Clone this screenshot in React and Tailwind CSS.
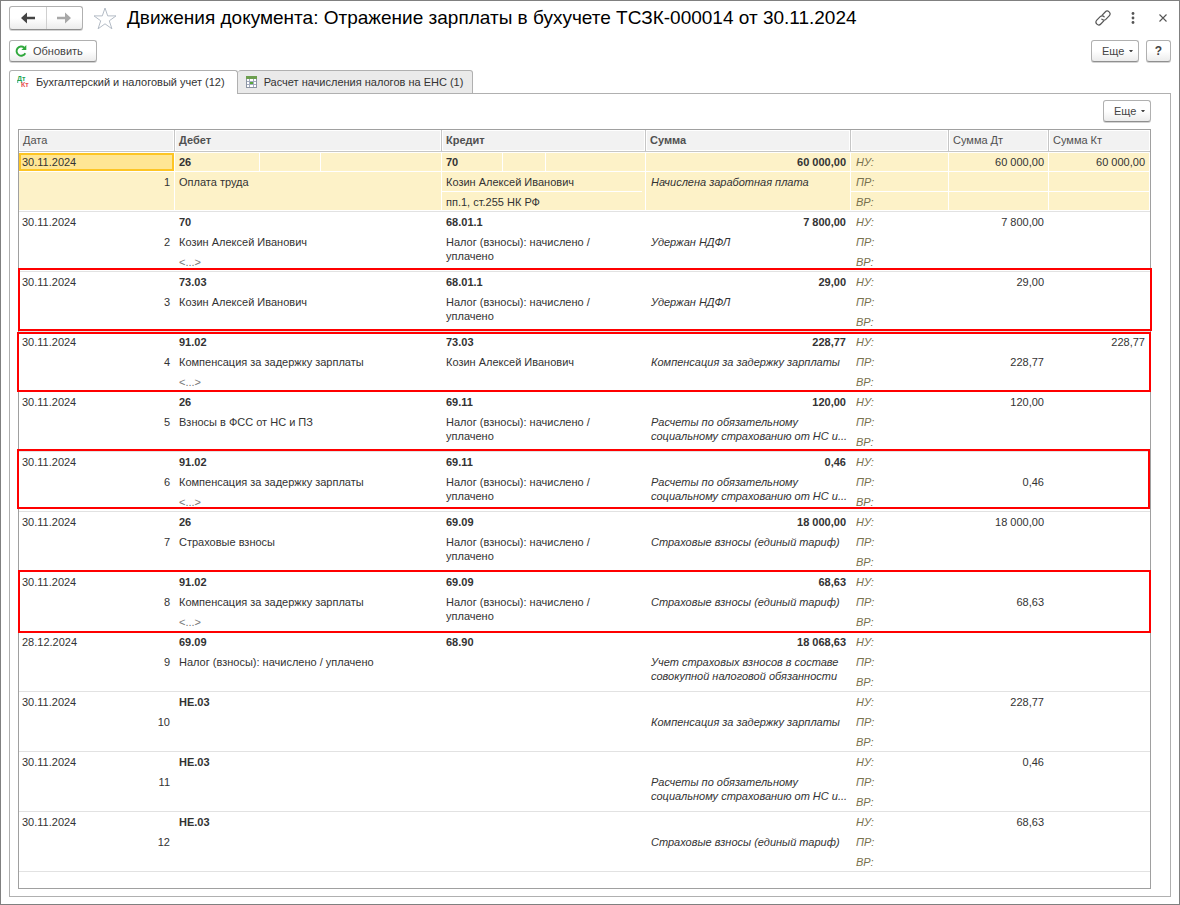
import React from 'react'
import clsx from 'clsx'

const TAX_NOTE = 'Налог (взносы): начислено /\nуплачено'
const FSS_NOTE = 'Расчеты по обязательному\nсоциальному страхованию от НС и...'
const DELAY_NOTE = 'Компенсация за задержку зарплаты'
const TARIFF_NOTE = 'Страховые взносы (единый тариф)'

// dt / kt hold three values: НУ, ПР, ВР
const entries = [
  {
    date: '30.11.2024',
    debit: ['26', 'Оплата труда'],
    credit: ['70', 'Козин Алексей Иванович', 'пп.1, ст.255 НК РФ'],
    sum: '60 000,00',
    note: 'Начислена заработная плата',
    dt: ['60 000,00'],
    kt: ['60 000,00'],
    selected: true
  },
  {
    date: '30.11.2024',
    debit: ['70', 'Козин Алексей Иванович', '<...>'],
    credit: ['68.01.1', TAX_NOTE],
    sum: '7 800,00',
    note: 'Удержан НДФЛ',
    dt: ['7 800,00'],
    kt: []
  },
  {
    date: '30.11.2024',
    debit: ['73.03', 'Козин Алексей Иванович'],
    credit: ['68.01.1', TAX_NOTE],
    sum: '29,00',
    note: 'Удержан НДФЛ',
    dt: ['29,00'],
    kt: [],
    frame: '-top-1 bottom-px -left-px -right-0.5'
  },
  {
    date: '30.11.2024',
    debit: ['91.02', DELAY_NOTE, '<...>'],
    credit: ['73.03', 'Козин Алексей Иванович'],
    sum: '228,77',
    note: DELAY_NOTE,
    dt: ['', '228,77'],
    kt: ['228,77'],
    frame: 'inset-y-0 -left-0.5 -right-px'
  },
  {
    date: '30.11.2024',
    debit: ['26', 'Взносы в ФСС от НС и ПЗ'],
    credit: ['69.11', TAX_NOTE],
    sum: '120,00',
    note: FSS_NOTE,
    dt: ['120,00'],
    kt: []
  },
  {
    date: '30.11.2024',
    debit: ['91.02', DELAY_NOTE, '<...>'],
    credit: ['69.11', TAX_NOTE],
    sum: '0,46',
    note: FSS_NOTE,
    dt: ['', '0,46'],
    kt: [],
    frame: '-top-[3px] bottom-[3px] -left-0.5 right-0'
  },
  {
    date: '30.11.2024',
    debit: ['26', 'Страховые взносы'],
    credit: ['69.09', TAX_NOTE],
    sum: '18 000,00',
    note: TARIFF_NOTE,
    dt: ['18 000,00'],
    kt: []
  },
  {
    date: '30.11.2024',
    debit: ['91.02', DELAY_NOTE, '<...>'],
    credit: ['69.09', TAX_NOTE],
    sum: '68,63',
    note: TARIFF_NOTE,
    dt: ['', '68,63'],
    kt: [],
    frame: '-top-0.5 -bottom-px -inset-x-px'
  },
  {
    date: '28.12.2024',
    debit: ['69.09', 'Налог (взносы): начислено / уплачено'],
    credit: ['68.90'],
    sum: '18 068,63',
    note: 'Учет страховых взносов в составе\nсовокупной налоговой обязанности',
    dt: [],
    kt: []
  },
  {
    date: '30.11.2024',
    debit: ['НЕ.03'],
    credit: [],
    note: DELAY_NOTE,
    dt: ['228,77'],
    kt: []
  },
  {
    date: '30.11.2024',
    debit: ['НЕ.03'],
    credit: [],
    note: FSS_NOTE,
    dt: ['0,46'],
    kt: []
  },
  {
    date: '30.11.2024',
    debit: ['НЕ.03'],
    credit: [],
    note: TARIFF_NOTE,
    dt: ['68,63'],
    kt: []
  }
]

const Button = ({ className, children, ...props }) => (
  <button
    type="button"
    className={clsx(
      'flex h-[22px] items-center rounded-[3px] border border-[#b0b0b0] border-b-[#8f8f8f] bg-gradient-to-b from-white from-50% to-[#ececec] text-[#444] shadow-[0_1px_0_#d4d4d4]',
      className
    )}
    {...props}
  >
    {children}
  </button>
)

const MoreButton = () => (
  <Button className="w-12 justify-between pr-[5px] pl-2.5">
    Еще
    <svg width="4" height="2" viewBox="0 0 4 2" fill="#444">
      <path d="M0 0h4L2.5 2h-1z" />
    </svg>
  </Button>
)

const Arrow = ({ className }) => (
  <svg width="14" height="12" viewBox="0 0 14 12" className={className}>
    <path d="M0 6L6 .5V4.8H14V7.2H6V11.5Z" fill="currentColor" />
  </svg>
)

const StarIcon = () => (
  <svg width="24" height="23" viewBox="0 0 24 23" fill="none" stroke="#b4bcc6">
    <path d="M12 1l2.7 7.9H23l-6.7 4.9 2.6 8-6.9-5-6.9 5 2.6-8L1 8.9h8.3z" />
  </svg>
)

const LinkIcon = () => (
  <svg width="16" height="16" viewBox="0 0 16 16" fill="none" stroke="#555" strokeWidth="1.2" strokeLinecap="round">
    <path d="M7.2 5.2L10.2 2a2.7 2.7 0 0 1 4 3.8l-3.4 3.6a2.7 2.7 0 0 1-4-.2" />
    <path d="M8.8 10.8L5.8 14a2.7 2.7 0 0 1-4-3.8l3.4-3.6a2.7 2.7 0 0 1 4 .2" />
  </svg>
)

const RefreshIcon = () => (
  <svg width="12" height="12" viewBox="0 0 12 12" fill="none">
    <path d="M9.2 2.6A4.6 4.6 0 1 0 10.3 8.2" stroke="#2fa83c" strokeWidth="1.9" />
    <path d="M11.3 0V5H6.4z" fill="#2fa83c" />
  </svg>
)

// Small "Дт / Кт" mark
const LedgerIcon = () => (
  <svg width="14" height="14" viewBox="0 0 14 14" fontFamily="Liberation Sans" fontWeight="bold" fontSize="7">
    <text x="0" y="6" fill="#1fa655">Дт</text>
    <text x="4" y="12" fill="#e8504f">Кт</text>
  </svg>
)

const SheetIcon = () => (
  <svg width="11" height="12" viewBox="0 0 11 12">
    <rect x=".5" y=".5" width="10" height="11" fill="#fff" stroke="#8c95a3" />
    <path d="M0 0h11v3H0z" fill="#6d9f4f" />
    <path d="M3.5 3v8M7.5 3v8M1 5.5h9M1 8.5h9" stroke="#a3abbd" />
    <path d="M4 6h3v2H4z" fill="#57a83c" />
  </svg>
)

// Three lines of a cell; in the selected entry they are divided by white rules
const Lines = ({ values, selected, className }) => (
  <div className={className}>
    {[0, 1, 2].map(i => (
      <div
        key={i}
        className={clsx('border-b leading-5', i === 2 ? 'h-[19px]' : 'h-5', selected ? 'border-white' : 'border-transparent')}
      >
        {values[i]}
      </div>
    ))}
  </div>
)

const Account = ({ values, selected, split, divided }) => {
  const rule = selected ? 'border-white' : 'border-transparent'
  return (
    <>
      <div className={clsx('flex h-5 border-b leading-5 font-bold', rule)}>
        <span className={clsx('border-r pl-1', split[0], rule)}>{values[0]}</span>
        <span className={clsx('border-r', split[1], rule)} />
      </div>
      <div className={clsx('h-[39px] border-b pr-1', rule)}>
        <div className={clsx('min-h-5 border-b pt-[3px] pl-1 leading-[14px] whitespace-pre-line', divided ? rule : 'border-transparent')}>
          {values[1]}
        </div>
        {values[2] && (
          <div className={clsx('pl-1 leading-5', values[2] === '<...>' && 'text-[#777]')}>{values[2]}</div>
        )}
      </div>
    </>
  )
}

const EntryRow = ({ entry, number }) => {
  const { selected } = entry
  const rule = selected ? 'border-white' : 'border-transparent'
  const cell = clsx(
    'border-b border-[#e2e2e2] p-0 align-top',
    selected && 'bg-[#fdf2c8] shadow-[inset_0_1px_0_white,inset_-1px_0_0_white]'
  )

  return (
    <tr className="relative">
      <td className={cell}>
        <div className={clsx('h-5 border-b', selected ? 'border-white pt-px pr-px' : 'border-transparent')}>
          <div
            className={clsx(
              'h-[18px] border-2 pl-px',
              selected ? 'border-[#fdc524] bg-[#ffe694] leading-[14px]' : 'border-transparent leading-4'
            )}
          >
            {entry.date}
          </div>
        </div>
        <div className={clsx('h-[39px] border-b pr-[5px] text-right leading-5', rule)}>{number}</div>
        {entry.frame && (
          <div className={clsx('pointer-events-none absolute z-10 border-2 border-[#ff0000]', entry.frame)} />
        )}
      </td>
      <td className={cell}>
        <Account values={entry.debit} selected={selected} split={['w-[85px]', 'w-[61px]']} />
      </td>
      <td className={cell}>
        <Account values={entry.credit} selected={selected} split={['w-[61px]', 'w-[43px]']} divided />
      </td>
      <td className={cell}>
        <div className={clsx('h-5 border-b pr-[5px] text-right leading-5 font-bold', rule)}>{entry.sum}</div>
        <div className={clsx('h-[39px] border-b pt-[3px] pl-[5px] leading-[14px] whitespace-pre italic', rule)}>
          {entry.note}
        </div>
      </td>
      <td className={cell}>
        <Lines values={['НУ:', 'ПР:', 'ВР:']} selected={selected} className="indent-[5px] text-[#77704c] italic" />
      </td>
      <td className={cell}>
        <Lines values={entry.dt} selected={selected} className="text-right [&>div]:pr-[5px]" />
      </td>
      <td className={cell}>
        <Lines values={entry.kt} selected={selected} className="text-right [&>div]:pr-[5px]" />
      </td>
    </tr>
  )
}

const columns = [
  { title: 'Дата', width: 'w-[156px]' },
  { title: 'Дебет', width: 'w-[267px]', bold: true },
  { title: 'Кредит', width: 'w-[204px]', bold: true },
  { title: 'Сумма', width: 'w-[205px]', bold: true },
  { title: '', width: 'w-[98px]' },
  { title: 'Сумма Дт', width: 'w-[100px]' },
  { title: 'Сумма Кт', width: 'w-[101px]' }
]

const App = () => {
  return (
    <div className="flex min-h-screen flex-col border border-[#808080] bg-white px-2 pt-[5px] pb-[7px] font-['Liberation_Sans',Arial,sans-serif] text-[11px] text-[#333]">
      {/* Title bar */}
      <header className="flex h-6 items-center">
        <div className="flex h-6 w-[74px] rounded-[3px] border border-[#b0b0b0] border-b-[#8f8f8f] bg-gradient-to-b from-white from-50% to-[#ececec] shadow-[0_1px_0_#d4d4d4]">
          <button type="button" aria-label="Назад" className="flex flex-1 items-center justify-center border-r border-[#d0d0d0] text-[#444]">
            <Arrow />
          </button>
          <button type="button" aria-label="Вперед" className="flex flex-1 items-center justify-center text-[#a8a8a8]">
            <Arrow className="rotate-180" />
          </button>
        </div>
        <button type="button" aria-label="В избранное" className="ml-2.5">
          <StarIcon />
        </button>
        <h1 className="ml-2.5 flex-1 text-[19px] leading-6 whitespace-nowrap text-black">
          Движения документа: Отражение зарплаты в бухучете ТСЗК-000014 от 30.11.2024
        </h1>
        <div className="flex items-center gap-4">
          <button type="button" aria-label="Ссылка">
            <LinkIcon />
          </button>
          <button type="button" aria-label="Меню" className="px-1">
            <svg width="4" height="12" viewBox="0 0 4 12" fill="#555">
              <circle cx="2" cy="1.5" r="1.4" />
              <circle cx="2" cy="6" r="1.4" />
              <circle cx="2" cy="10.5" r="1.4" />
            </svg>
          </button>
          <button type="button" aria-label="Закрыть" className="px-1">
            <svg width="8" height="8" viewBox="0 0 8 8" stroke="#555" strokeWidth="1.1">
              <path d="M.5.5l7 7M7.5.5l-7 7" />
            </svg>
          </button>
        </div>
      </header>

      {/* Commands */}
      <div className="mt-2.5 flex justify-between">
        <Button className="w-22 gap-1.5 pl-[5px]">
          <RefreshIcon />
          Обновить
        </Button>
        <div className="flex gap-[7px]">
          <MoreButton />
          <Button className="w-[25px] justify-center text-xs font-bold">?</Button>
        </div>
      </div>

      {/* Tabs */}
      <div role="tablist" className="z-10 mt-2 -mb-px flex leading-4">
        <button
          type="button"
          role="tab"
          aria-selected="true"
          className="flex h-6 items-center gap-[5px] rounded-t-[3px] border border-b-0 border-[#b0b0b0] bg-white pr-3 pb-0.5 pl-[7px]"
        >
          <LedgerIcon />
          Бухгалтерский и налоговый учет (12)
        </button>
        <button
          type="button"
          role="tab"
          aria-selected="false"
          className="flex h-6 items-center gap-[7px] rounded-t-[3px] border border-l-0 border-[#b0b0b0] bg-[#eaeaea] pr-[9px] pb-px pl-2"
        >
          <SheetIcon />
          Расчет начисления налогов на ЕНС (1)
        </button>
      </div>

      <main className="flex flex-1 flex-col border border-[#b0b0b0] px-2 pt-1.5 pb-[7px]">
        <div className="flex justify-end pr-[11px]">
          <MoreButton />
        </div>

        <div className="mt-[7px] mr-[11px] flex-1 border border-[#a0a0a0] pb-4">
          <table className="w-full table-fixed border-separate border-spacing-0">
            <thead>
              <tr>
                {columns.map((col, i) => (
                  <th
                    key={i}
                    className={clsx(
                      'h-[22px] border-b border-[#c6c6c6] bg-[#f2f2f2] p-0 pl-1 text-left text-[#505050] shadow-[inset_0_0_0_1px_white] not-last:border-r',
                      col.width,
                      col.bold ? 'font-bold' : 'font-normal'
                    )}
                  >
                    {col.title}
                  </th>
                ))}
              </tr>
            </thead>
            <tbody>
              {entries.map((entry, i) => (
                <EntryRow key={i} entry={entry} number={i + 1} />
              ))}
            </tbody>
          </table>
        </div>
      </main>
    </div>
  )
}

export default App
